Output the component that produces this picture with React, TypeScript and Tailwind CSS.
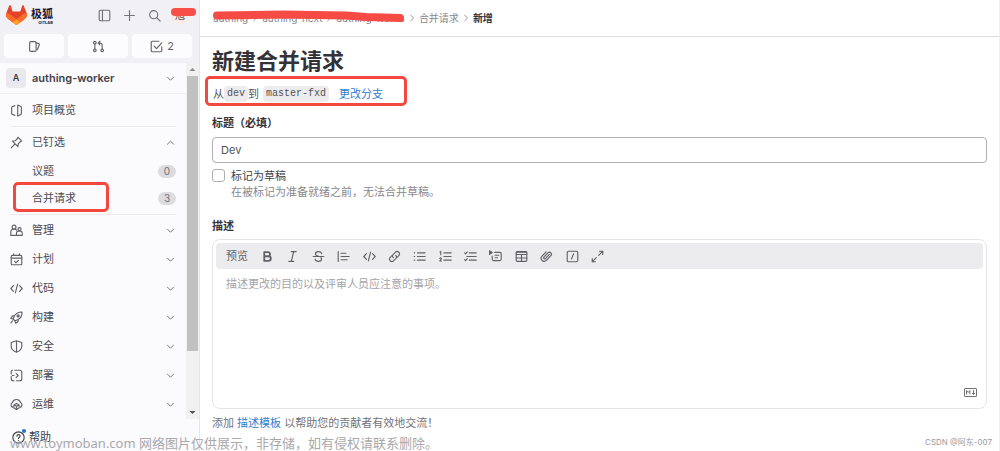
import React from "react";

type IconProps = { children: React.ReactNode; className?: string };

const Icon: React.FC<IconProps> = ({ children, className = "size-[13px]" }) => (
  <svg
    viewBox="0 0 16 16"
    className={`shrink-0 ${className}`}
    fill="none"
    stroke="currentColor"
    strokeWidth="1.4"
    strokeLinecap="round"
    strokeLinejoin="round"
    aria-hidden="true"
  >
    {children}
  </svg>
);

const chevronDown = <path d="M3.5 6l4.500 4.500L12.500 6" />;
const chevronUp = <path d="M3.500 10.500L8 6l4.500 4.500" />;
const chevronRight = <path d="M6 3.500L10.500 8 6 12.500" />;
const codeIcon = <path d="M4.200 4.500L1 8l3.200 3.500M11.800 4.500L15 8l-3.200 3.500M9.400 2.500l-2.800 11" />;

const icons = {
  project: (
    <path d="M9.500 1.200v13.600M6 2L2.600 3.400a1 1 0 00-.6.900v7.400a1 1 0 00.6.900L6 14M9.500 1.200l3.900 2a1 1 0 01.6.900v7.800a1 1 0 01-.6.900l-3.900 2" />
  ),
  pin: (
    <path d="M9.800 1.500l4.700 4.700-1.600.6-2.800 2.800-.3 3.500-6.900-6.900 3.500-.3 2.800-2.800zM6.200 9.800L1.500 14.500" />
  ),
  manage: (
    <>
      <circle cx="5" cy="3.800" r="2.400" />
      <path d="M7.800 14H1V9.500a3 3 0 013-3h2a3 3 0 012.300 1" />
      <circle cx="11.700" cy="6.300" r="1.900" />
      <path d="M8 14v-2.800a2.500 2.500 0 012.500-2.500h2a2.500 2.500 0 012.500 2.500V14z" />
    </>
  ),
  plan: (
    <>
      <rect x="1.500" y="3" width="13" height="11.500" rx="1.200" />
      <path d="M1.500 6.300h13M4.500 1v2M11.500 1v2M5.800 10.400l1.600 1.600 3-3" />
    </>
  ),
  code: codeIcon,
  build: (
    <>
      <path d="M14.800 1.200c-4.300-.2-7 1.300-9.300 4.600L4 10l2 2 4.200-1.500c3.300-2.300 4.800-5 4.600-9.300zM5.500 5.800L3 6 1 9l3 1M10.200 10.500L10 13l-3 2-1-3M3.200 12l-2 2.500" />
      <circle cx="10" cy="6" r="1.300" />
    </>
  ),
  secure: (
    <path d="M8 1L1.500 3v5c0 3.600 2.700 5.600 6.500 7.200 3.800-1.600 6.500-3.600 6.500-7.200V3L8 1zM8 1v14" />
  ),
  deploy: (
    <path d="M6 1.500h6A2.500 2.500 0 0114.500 4v8a2.500 2.500 0 01-2.500 2.500H8M1.500 9v3A2.500 2.500 0 004 14.500h1M1.500 6V3.500A2 2 0 013 1.500M3 8h2M7.500 5.500L10 8l-2.500 2.500" />
  ),
  operate: (
    <>
      <path d="M3.500 11.500A3.200 3.200 0 013 5.600a5.200 5.200 0 0110 0 3.200 3.200 0 01-.5 5.900" />
      <path d="M8 6.800l3.200 1.700v3.700L8 14.200l-3.200-2V8.500zM4.800 8.500L8 10.300l3.200-1.800M8 10.300v3.900" />
    </>
  ),
};

const menu = [
  { label: "管理", icon: icons.manage },
  { label: "计划", icon: icons.plan },
  { label: "代码", icon: icons.code },
  { label: "构建", icon: icons.build },
  { label: "安全", icon: icons.secure },
  { label: "部署", icon: icons.deploy },
  { label: "运维", icon: icons.operate },
];

const pinned = [
  { label: "议题", count: 0 },
  { label: "合并请求", count: 3, marked: true },
];

const tools = [
  {
    name: "粗体",
    icon: <path strokeWidth="2.200" d="M4 2.500h4.500a2.600 2.600 0 010 5.200H4zM4 7.700h5.200a2.900 2.900 0 010 5.800H4z" />,
  },
  { name: "斜体", icon: <path d="M6.500 2h6M3.500 14h6M9.500 2l-3 12" /> },
  {
    name: "删除线",
    icon: (
      <path d="M12 4.500C11.500 2.800 10 2 8 2 5.800 2 4.200 3 4.200 4.800 4.200 6.300 5.300 7 8 7.800M1.500 8h13M11 9.500c.6.500.8 1 .8 1.700C11.800 13 10.200 14 8 14s-3.800-.9-4.200-2.700" />
    ),
  },
  { name: "引用", icon: <path d="M1.500 2v12M5 4h6M5 8h10M5 12h7.500" /> },
  { name: "代码", icon: codeIcon },
  {
    name: "链接",
    icon: (
      <path d="M6.500 9.500a3 3 0 010-4.200l2.800-2.800a3 3 0 014.200 4.200l-2 2M9.500 6.500a3 3 0 010 4.200l-2.800 2.800a3 3 0 01-4.200-4.200l2-2" />
    ),
  },
  {
    name: "无序列表",
    icon: <path d="M1.500 3.500h.6M1.500 8h.6M1.500 12.500h.6M5.500 3.500H15M5.500 8H15M5.500 12.500H15" />,
  },
  {
    name: "有序列表",
    icon: (
      <path d="M1.200 2.300l1-.6v4M1 10.300c.8-1 2.200-.5 1.800.6L1 13.500h2M6 3.500h9M6 8h9M6 12.500h9" />
    ),
  },
  {
    name: "任务列表",
    icon: <path d="M.8 3.500l1.200 1.200 2-2.400M.8 11.800L2 13l2-2.400M6.500 3.500H15M3.500 8H15M6.500 12.500H15" />,
  },
  {
    name: "折叠内容",
    icon: (
      <>
        <path d="M.5 1l3.500 2.200L.5 5.500z" fill="currentColor" />
        <path d="M7 3h6.500A1.500 1.500 0 0115 4.500v7a1.500 1.500 0 01-1.500 1.500h-8A1.500 1.500 0 014 11.500V7.500M7.500 6.500h4.500M7.500 9.500h3" />
      </>
    ),
  },
  {
    name: "表格",
    icon: (
      <>
        <rect x="1.500" y="2" width="13" height="12" rx="1" />
        <path d="M1.500 5.500h13M1.500 9.800h13M8 5.500V14M1.500 2.700h13" />
      </>
    ),
  },
  {
    name: "附件",
    icon: (
      <path d="M11.500 5.500l-4.800 5a1.300 1.300 0 01-1.900-1.800l5-5.200a2.500 2.500 0 013.600 3.500l-5.500 5.800a3.700 3.700 0 01-5.400-5.200l5-5.200" />
    ),
  },
  {
    name: "快捷操作",
    icon: (
      <>
        <rect x="1.500" y="1.500" width="13" height="13" rx="1.500" />
        <path d="M9.300 4.800l-2.600 6.400" />
      </>
    ),
  },
  {
    name: "全屏",
    icon: <path d="M10.500 1.500h4v4M14.500 1.500l-5 5M5.500 14.500h-4v-4M1.500 14.500l5-5" />,
  },
];

const Logo = () => (
  <a href="#" className="flex items-center gap-1" aria-label="极狐 GitLab">
    <svg viewBox="0 0 25 24" className="h-5 w-[21px]" aria-hidden="true">
      <path
        fill="#E24329"
        d="M24.507 9.5l-.034-.09L21.082.562a.896.896 0 00-1.694.091l-2.29 7.01H7.825L5.535.653a.898.898 0 00-1.694-.09L.451 9.411.416 9.5a6.297 6.297 0 002.09 7.278l.042.032 5.16 3.867 2.56 1.935 1.554 1.176a1.051 1.051 0 001.268 0l1.555-1.176 2.56-1.935 5.211-3.9A6.297 6.297 0 0024.507 9.5z"
      />
      <path
        fill="#FC6D26"
        d="M24.507 9.5l-.034-.09a11.44 11.44 0 00-4.56 2.051l-7.447 5.632 4.742 3.584 5.211-3.9A6.297 6.297 0 0024.507 9.5z"
      />
      <path
        fill="#FCA326"
        d="M7.707 20.677l2.56 1.935 1.555 1.176a1.051 1.051 0 001.268 0l1.555-1.176 2.56-1.935-4.743-3.584-4.755 3.584z"
      />
      <path
        fill="#FC6D26"
        d="M5.01 11.461a11.43 11.43 0 00-4.56-2.05L.416 9.5a6.297 6.297 0 002.09 7.278l.042.032 5.16 3.867 4.745-3.584-7.443-5.632z"
      />
    </svg>
    <span className="flex flex-col items-end pt-1 font-bold text-[#1b1838]">
      <span className="text-[11px] leading-[11px]">极狐</span>
      <span className="text-[4px] leading-[5px]">GITLAB</span>
    </span>
  </a>
);

const Sidebar = () => (
  <aside className="relative flex h-screen w-[200px] shrink-0 flex-col border-r border-[#e6e6ea] bg-[#fbfafd]">
    <div className="bg-[#f1f0f4] px-1 pb-[5px]">
      <div className="flex h-[30px] items-center justify-between pr-[6px] pl-[2px]">
        <Logo />
        <div className="flex items-center gap-[10px] text-[#737278]">
          <div className="flex gap-3">
            <button type="button" aria-label="侧边栏">
              <Icon>
                <rect x="1.500" y="1.500" width="13" height="13" rx="1.500" />
                <path d="M5.500 1.500v13" />
              </Icon>
            </button>
            <button type="button" aria-label="新建">
              <Icon>
                <path d="M8 2v12M2 8h12" />
              </Icon>
            </button>
            <button type="button" aria-label="搜索">
              <Icon>
                <circle cx="7" cy="7" r="5" />
                <path d="M10.800 10.800L15 15" />
              </Icon>
            </button>
          </div>
          <span className="relative flex size-[18px] items-center justify-center rounded-full bg-[#fbe9e7] text-[10px] text-[#5c5052]">
            旭
            <span className="absolute -right-[7px] left-0 top-[2px] h-2 rounded-full bg-[#f84f48]" />
          </span>
        </div>
      </div>
      <div className="mt-1 grid grid-cols-3 gap-1 pr-[3px] text-[11px] text-[#626168]">
        <button type="button" aria-label="议题" className="flex h-6 items-center justify-center rounded bg-[#fcfcfe]">
          <Icon>
            <rect x="2" y="2" width="8" height="12" rx="1.500" />
            <path d="M10 3.500l3.200 1a1 1 0 01.7 1.300L11.500 12" />
          </Icon>
        </button>
        <button type="button" aria-label="合并请求" className="flex h-6 items-center justify-center rounded bg-[#fcfcfe]">
          <Icon>
            <circle cx="3.500" cy="3.300" r="1.600" />
            <circle cx="3.500" cy="12.700" r="1.600" />
            <circle cx="12.500" cy="12.700" r="1.600" />
            <path d="M3.500 5v6M12.500 11V6a2.200 2.200 0 00-2.200-2.200H8M9.800 1.500L7.500 3.800l2.300 2.300" />
          </Icon>
        </button>
        <button type="button" className="flex h-6 items-center justify-center gap-1 rounded bg-[#fcfcfe]">
          <Icon>
            <path d="M14.500 8.500V13a1.500 1.500 0 01-1.500 1.500H3A1.500 1.500 0 011.500 13V3A1.500 1.500 0 013 1.500h8M5 7.500l3 3 6.500-7" />
          </Icon>
          2
        </button>
      </div>
    </div>

    <div className="flex min-h-0 flex-1">
      <nav className="min-w-0 flex-1 overflow-hidden text-[11px] text-[#4c4b51]">
        <a href="#" className="flex h-[31px] items-center gap-[6px] border-b border-[#f0eff3] pr-[10px] pl-[6px] font-semibold text-[#434248]">
          <span className="flex size-5 items-center justify-center rounded bg-[#e9e9ed] text-[9px]">A</span>
          <span className="flex-1">authing-worker</span>
          <Icon className="size-[11px] text-[#737278]">{chevronDown}</Icon>
        </a>
        <div className="px-[10px]">
          <a href="#" className="flex h-[33px] items-center gap-[9px] border-b border-[#ececef]">
            <Icon className="size-[13px] text-[#626168]">{icons.project}</Icon>
            项目概览
          </a>
          <button type="button" className="flex h-[31px] w-full items-center gap-[9px]">
            <Icon className="size-[13px] text-[#626168]">{icons.pin}</Icon>
            <span className="flex-1 text-left">已钉选</span>
            <Icon className="size-[11px] text-[#737278]">{chevronUp}</Icon>
          </button>
          <div className="border-b border-[#ececef] pb-[2px]">
            {pinned.map((item) => (
              <a key={item.label} href="#" className="relative flex h-[27px] items-center justify-between pl-[22px]">
                {item.label}
                <span className="w-[18px] rounded-full bg-[#dcdcde] text-center text-[10px] leading-[13px] text-[#737278]">
                  {item.count}
                </span>
                {item.marked && (
                  <span className="absolute -top-[3px] left-[3px] h-[30px] w-24 rounded-[5px] border-3 border-[#f4473f]" />
                )}
              </a>
            ))}
          </div>
          <div className="pt-px">
            {menu.map((item) => (
              <button key={item.label} type="button" className="flex h-[29px] w-full items-center gap-[9px]">
                <Icon className="size-[13px] text-[#626168]">{item.icon}</Icon>
                <span className="flex-1 text-left">{item.label}</span>
                <Icon className="size-[11px] text-[#737278]">{chevronDown}</Icon>
              </button>
            ))}
          </div>
        </div>
      </nav>
      <div className="flex w-[13px] flex-col items-center bg-[#f1f1f1] px-px">
        <svg viewBox="0 0 13 13" className="size-[13px]" aria-hidden="true">
          <path d="M3.500 8l3-3 3 3z" fill="#8a8a8a" />
        </svg>
        <div className="w-full flex-1 bg-[#c1c1c1]" />
        <div className="h-[55px]" />
        <svg viewBox="0 0 13 13" className="size-[13px]" aria-hidden="true">
          <path d="M3.500 5l3 3 3-3z" fill="#505050" />
        </svg>
      </div>
    </div>

    <div className="h-8 shrink-0 px-3 pt-2 text-[11px] text-[#434248]">
      <button type="button" className="relative flex h-5 items-center gap-1">
        <Icon className="size-[13px]">
          <circle cx="8" cy="8" r="7" />
          <path d="M6 6.300A2 2 0 018 4.500c1.200 0 2 .8 2 1.800C10 7.600 8 7.800 8 9.300M8 11.700v.1" />
        </Icon>
        帮助
        <span className="absolute top-[2px] left-[10px] size-1 rounded-full bg-[#1f75cb]" />
      </button>
    </div>
  </aside>
);

const Breadcrumbs = () => (
  <nav className="relative flex h-[37px] items-center gap-[2px] border-b border-[#dcdcde] px-[13px] text-[10px] text-[#89888d]">
    <a href="#">authing</a>
    <Icon className="size-[10px]">{chevronRight}</Icon>
    <a href="#">authing-next</a>
    <Icon className="size-[10px]">{chevronRight}</Icon>
    <a href="#">authing-works</a>
    <Icon className="size-[10px]">{chevronRight}</Icon>
    <a href="#">合并请求</a>
    <Icon className="size-[10px]">{chevronRight}</Icon>
    <span className="font-bold text-[#333238]">新增</span>
    <svg viewBox="0 0 192 14" className="absolute top-[10px] left-3 h-[14px] w-48" aria-hidden="true">
      <path
        d="M5 5.500L72 4.500L134 5.500L154 7L188 8"
        fill="none"
        stroke="#f64b45"
        strokeWidth="8"
        strokeLinecap="round"
        strokeLinejoin="round"
      />
    </svg>
  </nav>
);

const Editor = () => (
  <div className="relative flex flex-col rounded-lg border border-[#e4e4e8] p-[3px]">
    <div className="flex h-[26px] items-center rounded bg-[#ececef] px-[10px] text-[#626168]">
      <button type="button" className="text-[11px]">预览</button>
      <div className="ml-[13px] flex w-[343px] justify-between">
        {tools.map((tool) => (
          <button key={tool.name} type="button" aria-label={tool.name} title={tool.name}>
            <Icon>{tool.icon}</Icon>
          </button>
        ))}
      </div>
    </div>
    <textarea
      id="description"
      placeholder="描述更改的目的以及评审人员应注意的事项。"
      className="h-[136px] resize-none px-[10px] pt-2 font-['Liberation_Mono','Noto_Sans_CJK_SC',monospace] text-[11px] leading-4 placeholder:text-[#a4a3a8] focus:outline-none"
    />
    <svg viewBox="0 0 13 9" className="absolute right-[9px] bottom-[11px] h-[9px] w-[13px]" fill="none" stroke="#737278" aria-label="Markdown">
      <rect x=".5" y=".5" width="12" height="8" rx=".5" />
      <path d="M2.500 6.500v-4l1.700 2 1.700-2v4M9.500 2v4M8 5l1.500 1.500L11 5" />
    </svg>
  </div>
);

const App: React.FC = () => {
  return (
    <div className="relative flex h-screen overflow-hidden bg-white font-['Inter','Noto_Sans_CJK_SC',sans-serif] text-[#333238]">
      <Sidebar />
      <main className="min-w-0 flex-1 border-r border-[#f0f0f2]">
        <Breadcrumbs />
        <form className="px-3 text-[11px] leading-4" onSubmit={(e) => e.preventDefault()}>
          <h1 className="pt-[10px] text-[22px] leading-7 font-bold">新建合并请求</h1>
          <div className="relative mt-[11px] flex h-4 items-center pl-px text-[#535158]">
            <span>从</span>
            <code className="rounded bg-[#ececef] px-[3px] font-['Liberation_Mono',monospace] text-[10px] leading-4">dev</code>
            <span>到</span>
            <code className="ml-1 rounded bg-[#ececef] px-[3px] font-['Liberation_Mono',monospace] text-[10px] leading-4">master-fxd</code>
            <a href="#" className="ml-[10px] text-[#2f80d0]">更改分支</a>
            <span className="absolute -top-[10px] -left-[7px] h-[30px] w-[202px] rounded-[5px] border-3 border-[#f4473f]" />
          </div>

          <label htmlFor="title" className="mt-[13px] block font-bold">标题（必填）</label>
          <input
            id="title"
            type="text"
            defaultValue="Dev"
            className="mt-[6px] block h-[26px] w-full rounded border border-[#b0afb4] px-2 text-[#535158] focus:outline-none"
          />
          <div className="mt-[5px] flex gap-[6px]">
            <input
              id="draft"
              type="checkbox"
              aria-describedby="draft-help"
              className="mt-px size-[13px] appearance-none rounded-[3px] border border-[#b0afb4] bg-white"
            />
            <div>
              <label htmlFor="draft" className="block text-[#434248]">标记为草稿</label>
              <p id="draft-help" className="text-[#89888d]">在被标记为准备就绪之前，无法合并草稿。</p>
            </div>
          </div>

          <label htmlFor="description" className="mt-[18px] mb-[5px] block font-bold">描述</label>
          <Editor />
          <p className="mt-[6px] text-[#737278]">
            添加 <a href="#" className="text-[#2f80d0]">描述模板</a> 以帮助您的贡献者有效地交流！
          </p>
        </form>
      </main>

      <p className="absolute bottom-0 left-[10px] font-['Noto_Sans','Noto_Sans_CJK_SC',sans-serif] text-[13px] leading-4 text-[#a9a9ac]">
        www.toymoban.com 网络图片仅供展示，非存储，如有侵权请联系删除。
      </p>
      <p className="absolute right-2 bottom-[3px] font-['Inter','Noto_Sans_CJK_SC',sans-serif] text-[8px] leading-3 text-[#99999d]">
        CSDN @阿东-007
      </p>
    </div>
  );
};

export default App;
